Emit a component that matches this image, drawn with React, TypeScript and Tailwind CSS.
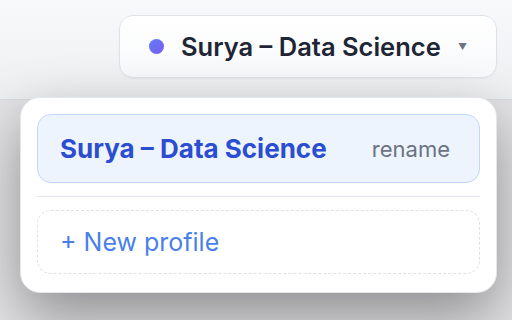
import React from "react";

export default function App() {
  return (
    <div
      className="relative w-[512px] h-[320px] overflow-hidden bg-[#e4e4e6]"
      style={{ fontFamily: "Inter, 'Noto Sans', sans-serif" }}
    >
      <div className="h-[100px] border-b border-[#dcdde0] bg-gradient-to-b from-[#f8f9fa] to-[#eeeff1] flex justify-end items-start pt-[15px] pr-[15px]">
        <button className="flex items-center h-[63px] w-[378px] rounded-[14px] border border-[#dfe3e8] bg-gradient-to-b from-white to-[#f8f9fb] pl-[29px] pr-[29px] shadow-[0_1px_2px_rgba(0,0,0,0.04)]">
          <span className="w-[15px] h-[15px] rounded-full bg-gradient-to-br from-[#5b7cf6] to-[#7b5cf0] shrink-0" />
          <span className="ml-[17px] text-[25.5px] leading-none font-semibold text-[#1e2535]">
            Surya – Data Science
          </span>
          <span className="ml-auto text-[9px] text-[#6b7280]">▼</span>
        </button>
      </div>

      <div className="absolute left-[20px] top-[97px] w-[477px] rounded-[20px] bg-white border border-[#e3e6ea] shadow-[0_24px_60px_rgba(0,0,0,0.38)] px-[16px] pt-[16px] pb-[18px]">
        <div className="flex items-center justify-between h-[69px] rounded-[14px] border-[1.5px] border-[#c3d7fb] bg-[#eef4fe] pl-[22px] pr-[29px]">
          <span className="text-[26px] leading-none font-bold text-[#2b4dd1]">
            Surya – Data Science
          </span>
          <span className="text-[22px] leading-none text-[#6b7383]">rename</span>
        </div>
        <div className="my-[13px] h-px bg-[#e2e6ec]" />
        <div className="flex items-center h-[64px] rounded-[14px] border-[1.5px] border-dashed border-[#dbe1e8] pl-[22px]">
          <span className="text-[25px] leading-none text-[#4a7fe9]">+ New profile</span>
        </div>
      </div>
    </div>
  );
}
